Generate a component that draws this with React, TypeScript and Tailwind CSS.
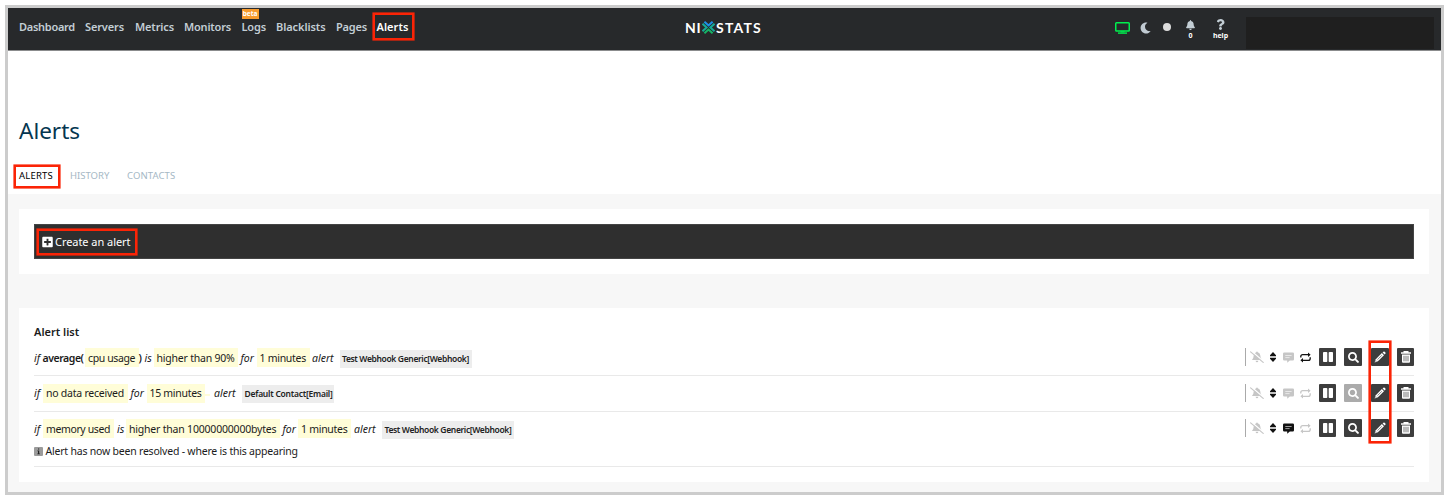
import type { ReactNode } from 'react';
import { FaBell, FaMoon, FaPlusSquare, FaQuestion, FaSearch } from 'react-icons/fa';

const navItems = [
  { label: 'Dashboard', cls: 'w-[66px] tracking-[-0.28px]' },
  { label: 'Servers', cls: 'w-[50px] tracking-[-0.13px]' },
  { label: 'Metrics', cls: 'w-[49px] tracking-[-0.14px]' },
  { label: 'Monitors', cls: 'w-[57.5px] tracking-[-0.2px]' },
  { label: 'Logs', cls: 'w-[34.5px] tracking-[-0.15px]', beta: true },
  { label: 'Blacklists', cls: 'w-[60px] tracking-[-0.08px]' },
  { label: 'Pages', cls: 'w-[40.5px] tracking-[-0.18px]' },
];

function Marker({ cls }: { cls: string }) {
  return <span className={`absolute border-2 border-[#fb2406] shadow-[0_0_0_0.6px_#fb2406] ${cls}`} />;
}

function Logo() {
  return (
    <div className="flex h-[14px] items-center font-['Lato'] text-[14px] leading-[14px] font-bold text-white">
      <span className="w-[17px] tracking-[0.8px]">NI</span>
      <svg className="h-[13px] w-[13px]" viewBox="0 0 13 13" fill="none" strokeWidth="2">
        <path d="M2.4 0.7 6.5 4.5 10.6 0.7" stroke="#1d8fe8" />
        <path d="M0.5 2.8 4.6 6.5 0.5 10.2M12.5 2.8 8.4 6.5 12.5 10.2" stroke="#16aa96" />
        <path d="M2.4 12.3 6.5 8.5 10.6 12.3" stroke="#16b566" />
      </svg>
      <span className="ml-[1px] tracking-[1.2px]">STATS</span>
    </div>
  );
}

function Header() {
  return (
    <header className="flex h-[43px] border-b border-[#8b8c8d] bg-[#27292b] pl-[11px] text-[11px] font-semibold text-[#c3ced5]">
      <nav className="flex h-[38px] w-[666px] items-center whitespace-nowrap">
        {navItems.map((n) => (
          <a key={n.label} className={`relative ${n.cls}`}>
            {n.label}
            {n.beta && (
              <span className="absolute top-[-10px] left-0 flex h-[10px] w-[17px] items-center justify-center bg-[#f79b2e] text-[6.5px] leading-none font-bold tracking-normal text-white">
                beta
              </span>
            )}
          </a>
        ))}
        <a className="relative tracking-[0.05px] text-white">
          Alerts
          <Marker cls="top-[-6px] left-[-4px] h-[27px] w-[41px]" />
        </a>
      </nav>
      <div className="flex h-[39px] w-[430px] items-center"><Logo /></div>
      <div className="flex h-[42px] flex-1 items-start">
        <svg className="mt-[14px] h-[12px] w-[15px]" viewBox="0 0 15 12" fill="none" stroke="#00f04f">
          <rect x="0.75" y="0.75" width="13.5" height="8.3" rx="0.8" strokeWidth="1.5" />
          <path d="M3 11.1h9" strokeWidth="1.4" />
          <path d="M5.5 9.9h4" />
        </svg>
        <FaMoon className="mt-[14px] ml-[10px] h-[12px] w-[11px] text-[#c0cad2]" />
        <span className="mt-[15px] ml-[12px] h-[8px] w-[8px] rounded-full bg-[#dcdcdc]" />
        <div className="ml-[15px] flex w-[9px] flex-col items-center pt-[12px]">
          <FaBell className="h-[10px] w-[9px]" />
          <span className="mt-[1px] text-[7px] leading-[9px] font-bold text-white">0</span>
        </div>
        <div className="ml-[17px] flex w-[17px] flex-col items-center pt-[11px]">
          <FaQuestion className="h-[11px] w-[9px]" />
          <span className="text-[7px] leading-[11px] font-bold text-white">help</span>
        </div>
        <div className="mt-[8.5px] ml-[17px] h-[32px] w-[188px] bg-[#1f1f1f]" />
      </div>
    </header>
  );
}

function Hl({ w, cls = 'leading-[20px]', children }: { w: string; cls?: string; children?: ReactNode }) {
  return <span className={`h-[19px] bg-[#fffdd8] pl-[3px] ${w} ${cls}`}>{children}</span>;
}

function It({ w, children }: { w: string; children: ReactNode }) {
  return <i className={w}>{children}</i>;
}

function Chip({ cls, children }: { cls: string; children: ReactNode }) {
  return (
    <span className={`h-[18px] bg-[#ededed] pl-[2.5px] text-[8.5px] leading-[18px] font-semibold text-[#222] ${cls}`}>
      {children}
    </span>
  );
}

function Btn({ cls, children }: { cls: string; children: ReactNode }) {
  return <span className={`flex h-[18px] items-center justify-center rounded-[1px] text-white ${cls}`}>{children}</span>;
}

function BellOff() {
  return (
    <svg className="ml-[4px] h-[12px] w-[14px] text-[#c6c6c6]" viewBox="0 0 14 12" fill="currentColor">
      <path d="M7 .6Q7.7.6 7.8 1.3Q10.3 1.9 10.3 4.6Q10.4 7 11.6 8.3L12 9H2L2.4 8.3Q3.6 7 3.7 4.6Q3.7 1.9 6.2 1.3Q6.3.6 7 .6ZM5.6 9.8H8.4Q8.2 11.3 7 11.3Q5.8 11.3 5.6 9.8Z" />
      <path d="M1.2 0 13.6 10.6" stroke="#fff" strokeWidth="1.6" />
      <path d="M.6.9 13.2 11.4" stroke="currentColor" strokeWidth="1.2" strokeLinecap="round" />
    </svg>
  );
}

function Sort() {
  return (
    <svg className="ml-[6px] h-[10px] w-[6px] text-[#111]" viewBox="0 0 6 10" fill="currentColor">
      <path d="M3 0 6 3.2V4.2H0V3.2ZM3 10 6 6.8V5.8H0V6.8Z" />
    </svg>
  );
}

function Comment({ cls }: { cls: string }) {
  return (
    <svg className={`ml-[7px] h-[11px] w-[11px] ${cls}`} viewBox="0 0 11 11" fill="currentColor">
      <path d="M1.2.5H9.8Q11 .5 11 1.7V7.3Q11 8.5 9.8 8.5H6.8L4.2 10.8V8.5H1.2Q0 8.5 0 7.3V1.7Q0 .5 1.2.5Z" />
      <path d="M2.3 3.5H8.6M2.3 5.6H6.6" stroke="#fff" strokeOpacity=".75" strokeWidth=".8" />
    </svg>
  );
}

function Repeat({ cls }: { cls: string }) {
  return (
    <svg className={`ml-[6px] h-[11px] w-[11px] ${cls}`} viewBox="0 0 11 11" fill="none" stroke="currentColor">
      <path d="M.8 5.6V4.6Q.8 2.7 2.7 2.7H8.6M10.2 5.2V6.4Q10.2 8.3 8.3 8.3H2.4" strokeWidth="1.3" />
      <path d="M8 .5 10.6 2.7 8 4.9ZM3 6.1.4 8.3 3 10.5Z" fill="currentColor" stroke="none" />
    </svg>
  );
}

function Actions({ comment, repeat, search = true }: { comment?: boolean; repeat?: boolean; search?: boolean }) {
  return (
    <div className="ml-auto flex h-[18px] items-center border-l border-[#aaa]">
      <BellOff />
      <Sort />
      <Comment cls={comment ? 'text-[#111]' : 'text-[#c6c6c6]'} />
      <Repeat cls={repeat ? 'text-[#111]' : 'text-[#c6c6c6]'} />
      <Btn cls="ml-[8px] w-[17px] bg-[#3d3d3d]">
        <svg className="h-[10px] w-[10px]" viewBox="0 0 10 10" fill="currentColor">
          <rect width="4.3" height="10" rx="0.8" /><rect x="5.7" width="4.3" height="10" rx="0.8" />
        </svg>
      </Btn>
      <Btn cls={`ml-[8px] w-[18px] ${search ? 'bg-[#3d3d3d]' : 'bg-[#ababab]'}`}>
        <FaSearch className="h-[11px] w-[11px]" />
      </Btn>
      <Btn cls="ml-[9px] w-[18px] bg-[#3d3d3d]">
        <svg className="h-[12px] w-[12px]" viewBox="0 0 12 12" fill="currentColor">
          <path d="M8.6 1.5 9.4.7Q10 .2 10.6.7L11.4 1.5Q11.9 2.1 11.4 2.7L10.6 3.5Z" />
          <path d="M7.9 2.1 10 4.2 3.9 10.3.6 11.5 1.8 8.2Z" />
          <path d="M3.4 8.7 7.8 4.3" stroke="#3d3d3d" strokeWidth=".6" />
          <circle cx="1.9" cy="10.1" r=".5" fill="#3d3d3d" />
        </svg>
      </Btn>
      <Btn cls="ml-[8px] w-[17px] bg-[#3d3d3d]">
        <svg className="h-[12px] w-[10px]" viewBox="0 0 10 12" fill="none" stroke="currentColor">
          <path d="M0 2H10M3.2 1.6V.7H6.8V1.6" strokeWidth="1.4" />
          <path d="M1 3.5H9V10.8Q9 11.8 8 11.8H2Q1 11.8 1 10.8Z" fill="currentColor" stroke="none" />
          <path d="M3 4.8V10.3M5 4.8V10.3M7 4.8V10.3" stroke="#3d3d3d" strokeWidth=".7" />
        </svg>
      </Btn>
    </div>
  );
}

export default function App() {
  return (
    <div className="h-[500px] bg-white pt-[5px] pl-[5px] font-['Noto_Sans',sans-serif] text-[10.5px] text-[#1b1b1b]">
      <div className="h-[490px] w-[1439px] border-[3px] border-[#ccc] bg-[#f7f7f7]">
        <Header />
        <section className="h-[143px] bg-white pl-[11px]">
          <h1 className="pt-[64px] text-[22.5px] leading-[32px] text-[#053650]">Alerts</h1>
          <div className="mt-[19px] flex h-[20px] items-center text-[9.5px] text-[#a5b8c5]">
            <a className="relative w-[51px] tracking-[0.2px] text-black">
              ALERTS
              <Marker cls="top-[-4px] left-[-5px] h-[23px] w-[46px]" />
            </a>
            <a className="w-[57px]">HISTORY</a>
            <a className="tracking-[0.1px]">CONTACTS</a>
          </div>
        </section>
        <main className="px-[11px] pt-[15px] whitespace-nowrap">
          <section className="h-[65px] w-[1410px] bg-white p-[15px]">
            <div className="relative flex h-[35px] items-center border border-[#444] bg-[#2f2f2f] pl-[7px] text-[11px] text-white">
              <FaPlusSquare className="mr-[2px] h-[12px] w-[11px]" />
              <span className="pt-[1px] tracking-[-0.05px]">Create an alert</span>
              <Marker cls="top-[4px] left-[2px] h-[26px] w-[100px]" />
            </div>
          </section>
          <section className="mt-[34px] h-[174px] w-[1410px] bg-white px-[15px] pt-[16px]">
            <h2 className="h-[16px] text-[11px] leading-[16px] font-semibold">Alert list</h2>
            <div className="relative">
              <div className="flex h-[36px] border-b border-[#e9e9e9] pt-[8px] leading-[21px]">
                <It w="w-[8.5px]">if</It>
                <span className="w-[42.5px] font-semibold tracking-[-0.45px]">average(</span>
                <Hl w="w-[53.5px]" cls="leading-[21px] tracking-[-0.39px]">cpu usage</Hl>
                <span className="w-[6px] font-semibold">)</span>
                <It w="w-[9px]">is</It>
                <Hl w="w-[84px]" cls="leading-[21px] tracking-[-0.21px]">higher than 90%</Hl>
                <span className="w-[3px]" />
                <It w="w-[16px]">for</It>
                <Hl w="w-[53px]" cls="leading-[21px] tracking-[-0.28px]">1 minutes</Hl>
                <span className="w-[2.5px]" />
                <It w="w-[27.5px]">alert</It>
                <Chip cls="mt-[2px] w-[132px] tracking-[-0.35px]">Test Webhook Generic[Webhook]</Chip>
                <Actions repeat />
              </div>
              <div className="flex h-[36px] border-b border-[#e9e9e9] pt-[8px] leading-[19px]">
                <It w="w-[9px]">if</It>
                <Hl w="w-[85px]" cls="leading-[19px] tracking-[-0.24px]">no data received</Hl>
                <span className="w-[2.5px]" />
                <It w="w-[16px]">for</It>
                <Hl w="w-[58.5px]" cls="leading-[19px] tracking-[-0.3px]">15 minutes</Hl>
                <span className="mt-[10px] h-[2px] w-[5px] bg-[#fffdd8]" />
                <span className="w-[4px]" />
                <It w="w-[28px]">alert</It>
                <Chip cls="mt-[1px] w-[92px] tracking-[-0.24px]">Default Contact[Email]</Chip>
                <Actions search={false} />
              </div>
              <div className="h-[55px] border-b border-[#e9e9e9] pt-[7px]">
                <div className="flex h-[20px] leading-[21px]">
                  <It w="w-[9px]">if</It>
                  <Hl w="w-[71px]" cls="leading-[21px] tracking-[-0.38px]">memory used</Hl>
                  <span className="w-[3px]" />
                  <It w="w-[9px]">is</It>
                  <Hl w="w-[154px]" cls="leading-[21px] tracking-[-0.2px]">higher than 10000000000bytes</Hl>
                  <span className="w-[2.5px]" />
                  <It w="w-[15.5px]">for</It>
                  <Hl w="w-[53px]" cls="leading-[21px] tracking-[-0.28px]">1 minutes</Hl>
                  <span className="w-[3px]" />
                  <It w="w-[28px]">alert</It>
                  <Chip cls="mt-[2px] w-[132px] tracking-[-0.35px]">Test Webhook Generic[Webhook]</Chip>
                  <Actions comment />
                </div>
                <div className="flex items-center pt-[5px] leading-[14px]">
                  <svg className="mr-[2.5px] h-[9px] w-[9px]" viewBox="0 0 9 9">
                    <rect width="9" height="9" rx="1" fill="#9b9b9b" />
                    <path d="M4 1.5H5.2V2.6H4ZM3.4 3.5H5.2V6.5H5.9V7.3H3.3V6.5H4V4.3H3.4Z" fill="#222" />
                  </svg>
                  <span className="tracking-[-0.21px]">Alert has now been resolved - where is this appearing</span>
                </div>
              </div>
              <Marker cls="top-[1px] right-[23px] h-[102px] w-[22px]" />
            </div>
          </section>
        </main>
      </div>
    </div>
  );
}
